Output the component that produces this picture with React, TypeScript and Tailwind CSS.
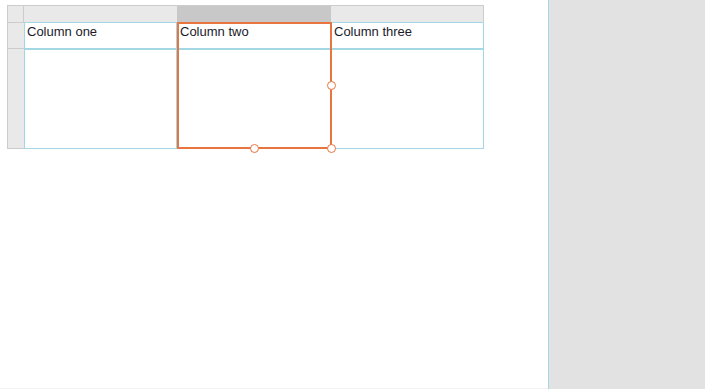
const COLS = [
  { label: "Column one", width: 153 },
  { label: "Column two", width: 154, selected: true },
  { label: "Column three", width: 153 },
];

export default function App() {
  return (
    <div className="flex h-[389px] w-[705px] bg-white font-['Liberation_Sans',Arial,sans-serif] text-[13px] text-[#1a1a2a]">
      <div className="flex-1 border-b border-[#f2f2f2] pl-[7px] pt-[5px]">
        <div className="relative flex w-[478px]">
          {/* row header strip */}
          <div className="flex w-[17px] flex-col border-l border-[#cccccc] bg-[#e9e9e9]">
            <div className="h-[17px] border-t border-r border-[#cccccc]" />
            <div className="h-[26px] border-t border-[#cccccc]" />
            <div className="h-[101px] border-y border-[#cccccc]" />
          </div>
          {COLS.map((c, i) => (
            <div key={i} className="flex flex-col" style={{ width: c.width }}>
              <div
                className={`h-[17px] border-t border-[#cccccc] ${
                  i === COLS.length - 1 ? "border-r" : ""
                } ${c.selected ? "bg-[#c8c8c8]" : "bg-[#e9e9e9]"}`}
              />
              <div className="h-[27px] border border-[#a4d7e5] pl-[2px] leading-[18px]">
                {c.label}
              </div>
              <div className="h-[100px] border border-[#a4d7e5]" />
            </div>
          ))}
          {/* selection overlay on column two */}
          <div className="absolute left-[170px] top-[17px] h-[127px] w-[155px] border-2 border-[#e8743f]">
            <span className="absolute right-[-6px] top-[57px] h-[9px] w-[9px] rounded-full border border-[#e8743f] bg-white" />
            <span className="absolute bottom-[-6px] left-[71px] h-[9px] w-[9px] rounded-full border border-[#e8743f] bg-white" />
            <span className="absolute bottom-[-6px] right-[-6px] h-[9px] w-[9px] rounded-full border border-[#e8743f] bg-white" />
          </div>
        </div>
      </div>
      <div className="w-[157px] border-l border-[#a4d7e5] bg-[#e2e2e2]" />
    </div>
  );
}
